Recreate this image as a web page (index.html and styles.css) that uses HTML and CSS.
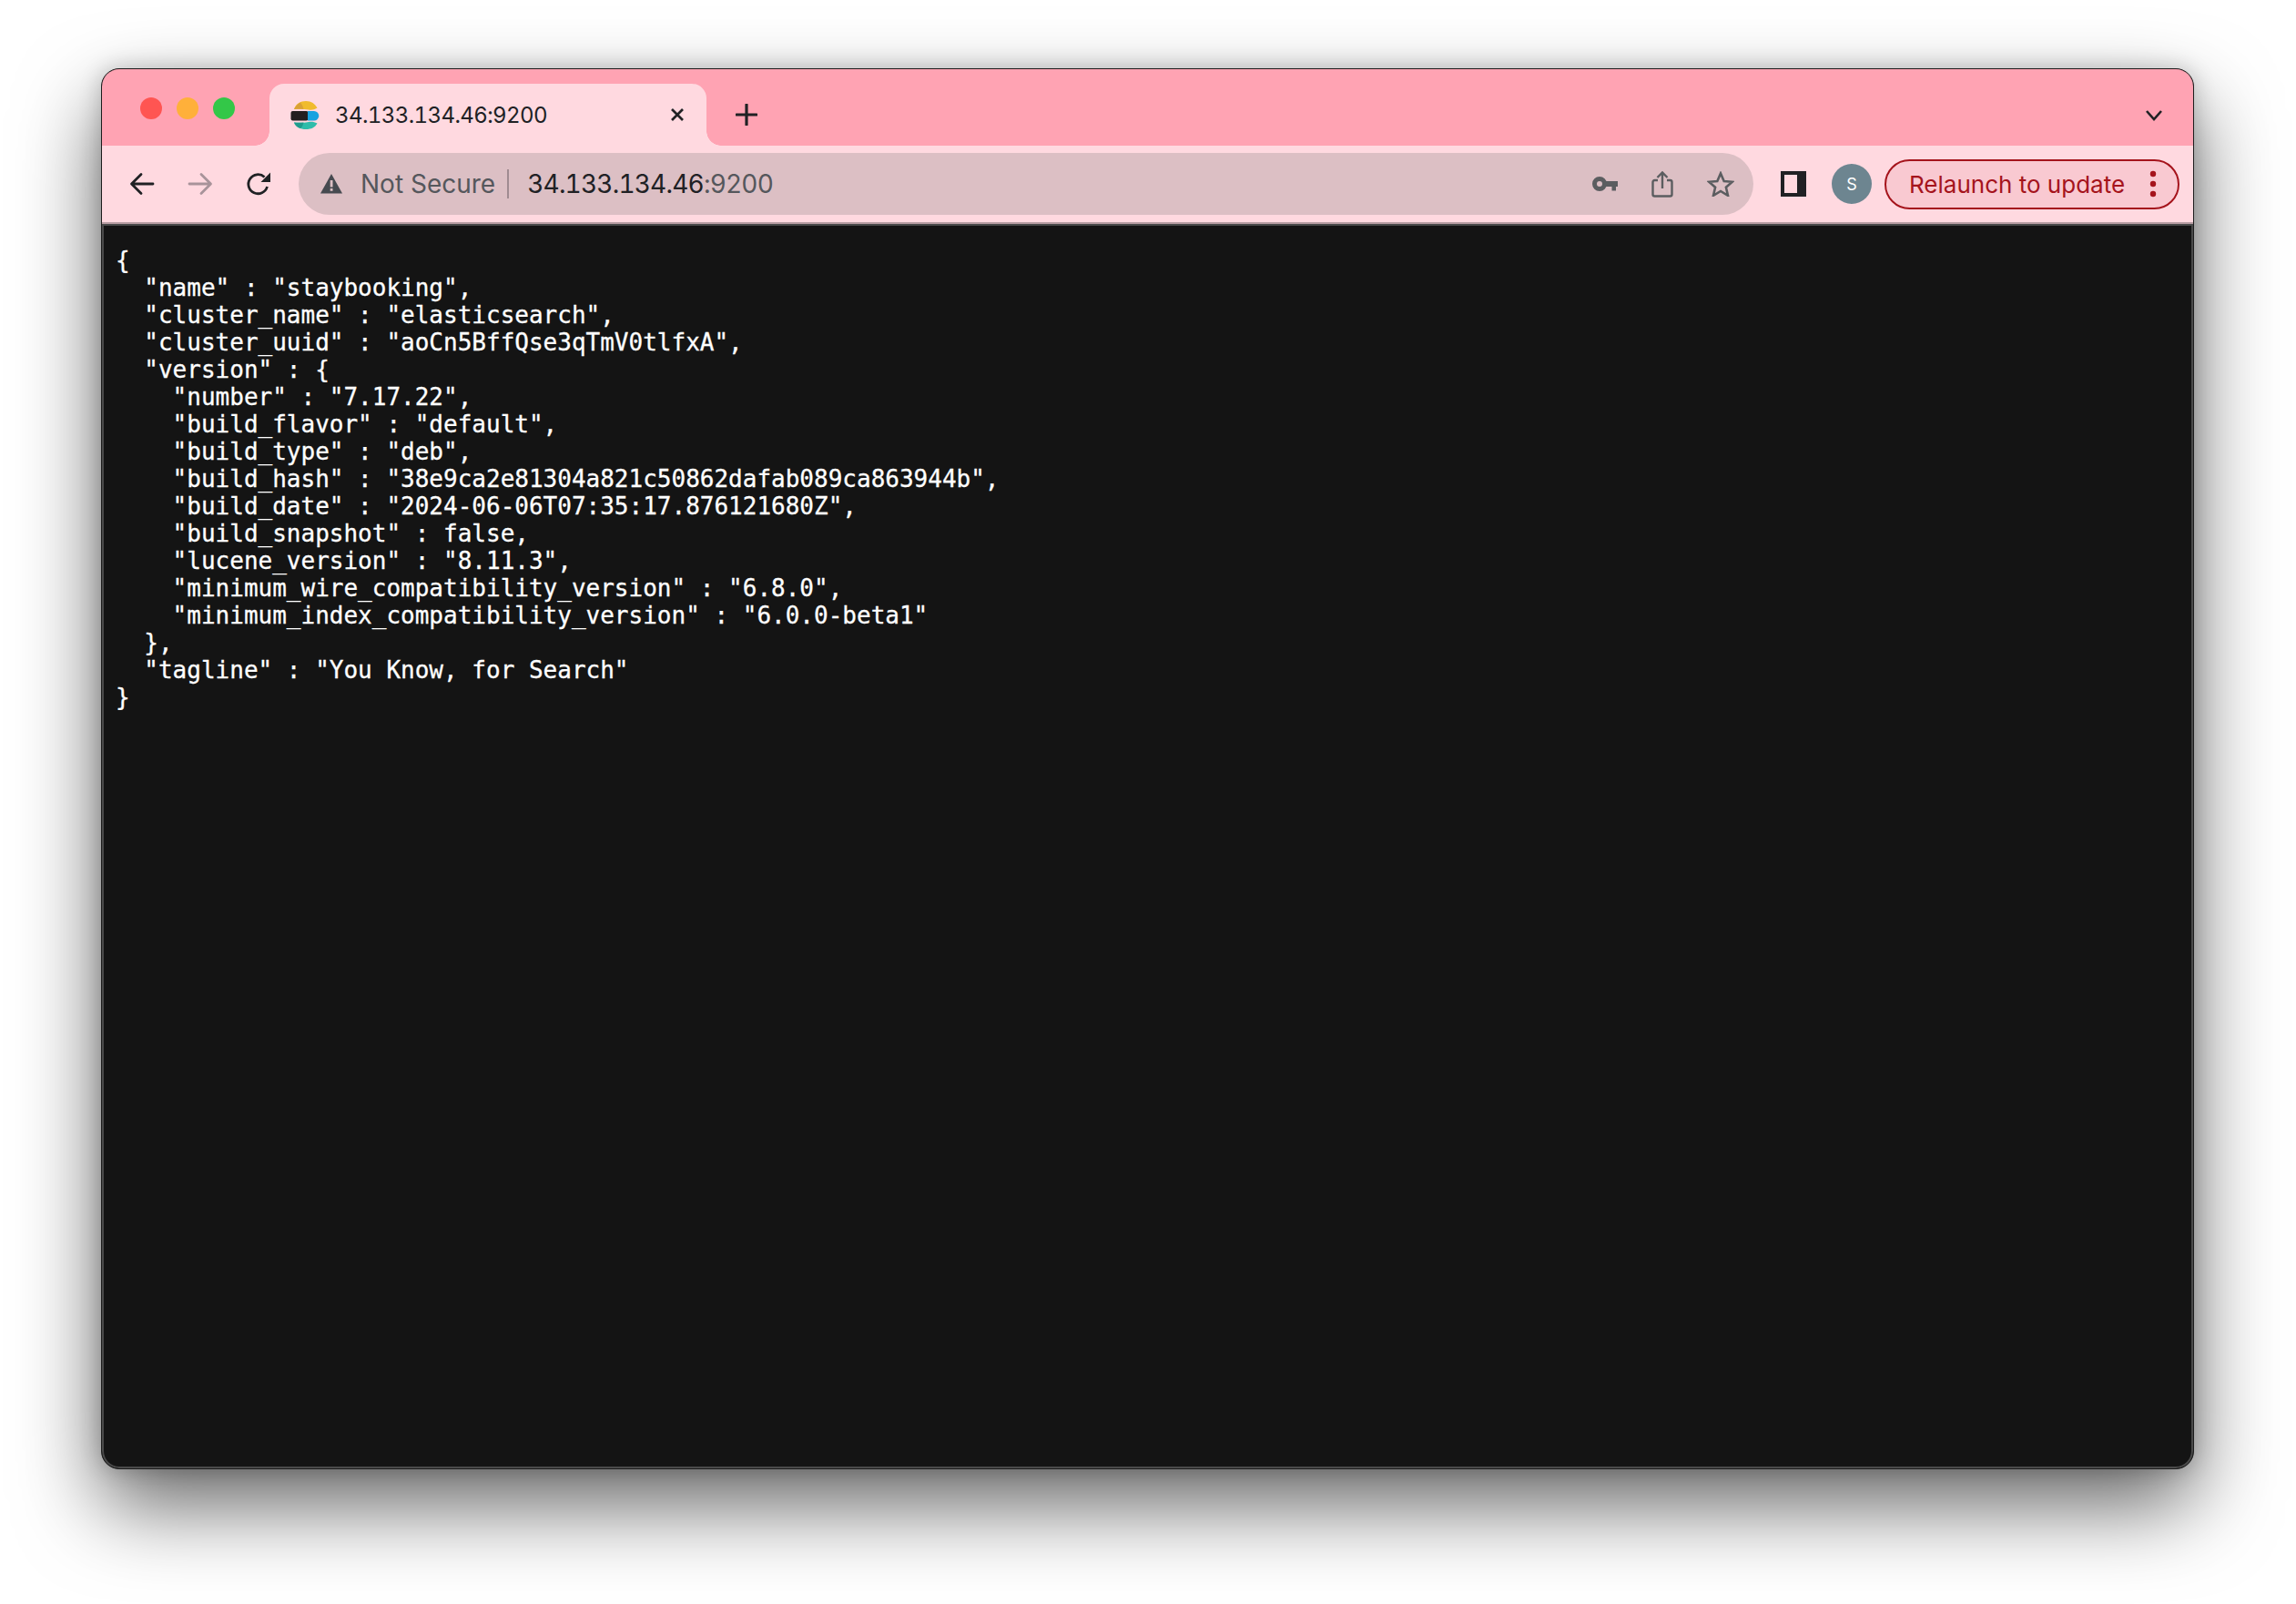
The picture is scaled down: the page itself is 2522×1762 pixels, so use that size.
FILE: index.html
```html
<!DOCTYPE html>
<html lang="en">
<head>
<meta charset="utf-8">
<title>34.133.134.46:9200</title>
<link rel="stylesheet" href="styles.css">
</head>
<body>
<div class="window">
  <div class="tabbar">
    <div class="lights">
      <span class="light red"></span>
      <span class="light amber"></span>
      <span class="light green"></span>
    </div>
    <div class="tab">
      <svg class="favicon" viewBox="0 0 32 32" width="32" height="32">
        <path d="M4 10 C6 4 11 1 17 1 C23 1 27 4 29.500 8.500 C26 10.500 24 11 20 10.500 C15 9.500 9 9.500 4 10Z" fill="#f0bb2e"/>
        <path d="M4 10 C5.500 6.500 7.500 4.500 11 2.500 C13 5 14 7.500 14.500 10 C11 9.800 7.500 9.800 4 10Z" fill="#d9a136"/>
        <rect x="0.500" y="12" width="19" height="10.500" rx="2" fill="#231f20"/>
        <path d="M19 12 H26 A5.200 5.200 0 0 1 26 22.500 H19Z" fill="#17a2e0"/>
        <path d="M4 24.500 C9 25 15 25 20 24 C24 23.500 26 24 29.500 25.500 C27 30 23 32 17 32 C11 32 6 30 4 24.500Z" fill="#2fbcaa"/>
        <path d="M4 24.500 C7 24.800 11 24.800 14.500 24.500 C14 27 13 29.500 11 31 C7.500 30 5 27.500 4 24.500Z" fill="#1f9c8d"/>
      </svg>
      <span class="tab-title">34.133.134.46:9200</span>
      <svg class="tab-close" viewBox="0 0 16 16" width="16" height="16"><path d="M2 2 L14 14 M14 2 L2 14" stroke="#202124" stroke-width="2.700" fill="none"/></svg>
    </div>
    <svg class="new-tab" viewBox="0 0 24 24" width="24" height="24"><path d="M12 1 V23 M1 12 H23" stroke="#202124" stroke-width="3.200" stroke-linecap="round" fill="none"/></svg>
    <svg class="tab-search" viewBox="0 0 20 14" width="20" height="14"><path d="M2 2 L10 11 L18 2" stroke="#202124" stroke-width="2.600" fill="none"/></svg>
  </div>

  <div class="toolbar">
    <div class="nav">
      <svg viewBox="0 0 28 28" width="28" height="28"><path d="M26 14 H3 M13 3.500 L2.500 14 L13 24.500" stroke="#202124" stroke-width="2.800" stroke-linecap="round" stroke-linejoin="round" fill="none"/></svg>
      <svg viewBox="0 0 28 28" width="28" height="28"><path d="M2 14 H25 M15 3.500 L25.500 14 L15 24.500" stroke="#a8939a" stroke-width="2.800" stroke-linecap="round" stroke-linejoin="round" fill="none"/></svg>
      <svg viewBox="0 0 28 28" width="28" height="28"><path d="M23.500 17 A10.500 10.500 0 1 1 20.500 6.500" stroke="#202124" stroke-width="2.800" fill="none"/><path d="M27 1.500 V12 H16.500Z" fill="#202124"/></svg>
    </div>
    <div class="omnibox">
      <svg class="warn" viewBox="0 0 24 22" width="24" height="22"><path d="M12 0 L24 21.500 H0Z" fill="#464a50"/><rect x="10.700" y="7" width="2.800" height="7.500" fill="#dcbfc4"/><rect x="10.700" y="16" width="2.800" height="2.800" fill="#dcbfc4"/></svg>
      <span class="not-secure">Not Secure</span>
      <span class="divider"></span>
      <span class="url"><span class="host">34.133.134.46</span>:9200</span>
      <span class="omni-actions">
        <svg viewBox="0 0 28 16" width="28" height="16"><circle cx="8" cy="8" r="5.500" fill="none" stroke="#5b5d60" stroke-width="5"/><path d="M13 5 H28 V11 H26 V15.500 H21.500 V11 H13Z" fill="#5b5d60"/></svg>
        <svg viewBox="0 0 24 30" width="24" height="30"><path d="M7 11 H3.500 A2 2 0 0 0 1.500 13 V26.500 A2 2 0 0 0 3.500 28.500 H20.500 A2 2 0 0 0 22.500 26.500 V13 A2 2 0 0 0 20.500 11 H17" stroke="#5b5d60" stroke-width="2.400" fill="none"/><path d="M12 20 V3 M6.500 8 L12 2.500 L17.500 8" stroke="#5b5d60" stroke-width="2.400" fill="none"/></svg>
        <svg viewBox="0 0 30 28" width="30" height="28"><path d="M15 2.500 L18.700 11 L27.800 11.800 L20.900 17.800 L23 26.800 L15 22 L7 26.800 L9.100 17.800 L2.200 11.800 L11.300 11Z" stroke="#5b5d60" stroke-width="2.600" stroke-linejoin="miter" fill="none"/></svg>
      </span>
    </div>
    <svg class="side-panel" viewBox="0 0 28 28" width="28" height="28"><path fill-rule="evenodd" d="M0 0 H28 V28 H0Z M4 4 V24 H18 V4Z" fill="#202124"/></svg>
    <span class="avatar">S</span>
    <div class="relaunch">
      <span class="relaunch-label">Relaunch to update</span>
      <svg viewBox="0 0 8 30" width="8" height="30"><circle cx="4" cy="4" r="3.200" fill="#a5141c"/><circle cx="4" cy="15" r="3.200" fill="#a5141c"/><circle cx="4" cy="26" r="3.200" fill="#a5141c"/></svg>
    </div>
  </div>

  <main class="page"><pre class="json">{
  "name" : "staybooking",
  "cluster_name" : "elasticsearch",
  "cluster_uuid" : "aoCn5BffQse3qTmV0tlfxA",
  "version" : {
    "number" : "7.17.22",
    "build_flavor" : "default",
    "build_type" : "deb",
    "build_hash" : "38e9ca2e81304a821c50862dafab089ca863944b",
    "build_date" : "2024-06-06T07:35:17.876121680Z",
    "build_snapshot" : false,
    "lucene_version" : "8.11.3",
    "minimum_wire_compatibility_version" : "6.8.0",
    "minimum_index_compatibility_version" : "6.0.0-beta1"
  },
  "tagline" : "You Know, for Search"
}</pre></main>
</div>
</body>
</html>
```
FILE: styles.css
```css
html, body {
  height: 100%;
  margin: 0;
}

body {
  box-sizing: border-box;
  display: flex;
  padding: 75px 112px 148px 111px;
  background: #fff;
  overflow: hidden;
  font-family: Inter, "Liberation Sans", sans-serif;
}

.window {
  flex: 1;
  display: flex;
  flex-direction: column;
  min-width: 0;
  border-radius: 20px;
  overflow: hidden;
  background: #141414;
  border: 1px solid #1c1c1c;
  box-shadow: 0 40px 90px rgba(0, 0, 0, 0.6), 0 0 24px rgba(0, 0, 0, 0.2);
}

/* Tab strip */
.tabbar {
  display: flex;
  align-items: flex-end;
  height: 84px;
  flex: none;
  background: #ffa3b3;
}

.lights {
  display: flex;
  gap: 16px;
  align-self: flex-start;
  width: 184px;
  box-sizing: border-box;
  padding: 31px 0 0 42px;
}

.light {
  width: 24px;
  height: 24px;
  border-radius: 50%;
}

.red { background: #ff5552; }
.amber { background: #ffb03a; }
.green { background: #33c748; }

.tab {
  position: relative;
  display: flex;
  align-items: center;
  width: 480px;
  height: 68px;
  box-sizing: border-box;
  padding: 0 24px 0 23px;
  border-radius: 16px 16px 0 0;
  background: #ffd9e0;
}

.tab::before,
.tab::after {
  content: "";
  position: absolute;
  bottom: 0;
  width: 16px;
  height: 16px;
}

.tab::before {
  right: 100%;
  background: radial-gradient(circle at 0 0, transparent 15.500px, #ffd9e0 16px);
}

.tab::after {
  left: 100%;
  background: radial-gradient(circle at 100% 0, transparent 15.500px, #ffd9e0 16px);
}

.favicon { flex: none; }

.tab-title {
  margin-left: 17px;
  flex: 1;
  font-size: 24px;
  font-variant-numeric: tabular-nums;
  letter-spacing: -0.6px;
  color: #202124;
  white-space: nowrap;
}

.tab-close { flex: none; }

.new-tab {
  flex: none;
  margin: 0 0 22px 32px;
}

.tab-search {
  flex: none;
  margin: 0 33px 26px auto;
}

/* Toolbar */
.toolbar {
  display: flex;
  align-items: center;
  height: 86px;
  flex: none;
  box-sizing: border-box;
  border-bottom: 2px solid #b99ea4;
  background: #ffd9e0;
}

.nav {
  display: flex;
  gap: 36px;
  align-items: center;
  flex: none;
  margin-left: 30px;
}

.omnibox {
  display: flex;
  align-items: center;
  flex: none;
  width: 1598px;
  height: 68px;
  box-sizing: border-box;
  margin-left: 30px;
  padding: 0 21px 0 24px;
  border-radius: 34px;
  background: #dcbfc4;
}

.warn { flex: none; }

.not-secure {
  margin-left: 20px;
  font-size: 28px;
  color: #55575c;
  white-space: nowrap;
}

.divider {
  width: 2px;
  height: 32px;
  margin: 0 20px 0 13px;
  background: #a08b91;
}

.url {
  font-size: 28px;
  font-variant-numeric: tabular-nums;
  letter-spacing: -0.8px;
  color: #55575c;
  white-space: nowrap;
}

.host { color: #202124; }

.omni-actions {
  display: flex;
  align-items: center;
  gap: 37px;
  margin-left: auto;
}

.side-panel {
  flex: none;
  margin-left: 30px;
}

.avatar {
  display: flex;
  align-items: center;
  justify-content: center;
  flex: none;
  width: 44px;
  height: 44px;
  margin-left: 28px;
  border-radius: 50%;
  background: #6d8590;
  color: #fff;
  font-size: 18px;
}

.relaunch {
  display: flex;
  align-items: center;
  justify-content: space-between;
  flex: none;
  width: 324px;
  height: 55px;
  box-sizing: border-box;
  margin-left: 14px;
  padding: 0 23px 0 25px;
  border: 2px solid #a5141c;
  border-radius: 28px;
  background: #f9c9d1;
  color: #a5141c;
  font-size: 26px;
}

.relaunch-label { white-space: nowrap; }

/* Page */
.page {
  flex: 1;
  min-height: 0;
  box-sizing: border-box;
  background: #141414;
  border-radius: 0 0 19px 19px;
  box-shadow: inset 0 0 0 2px #4a4a4a;
}

.json {
  margin: 0;
  padding: 25px 0 0 15px;
  font-family: "DejaVu Sans Mono", monospace;
  font-size: 26px;
  line-height: 30px;
  color: #fff;
  -webkit-text-stroke: 0.3px #fff;
}
```
